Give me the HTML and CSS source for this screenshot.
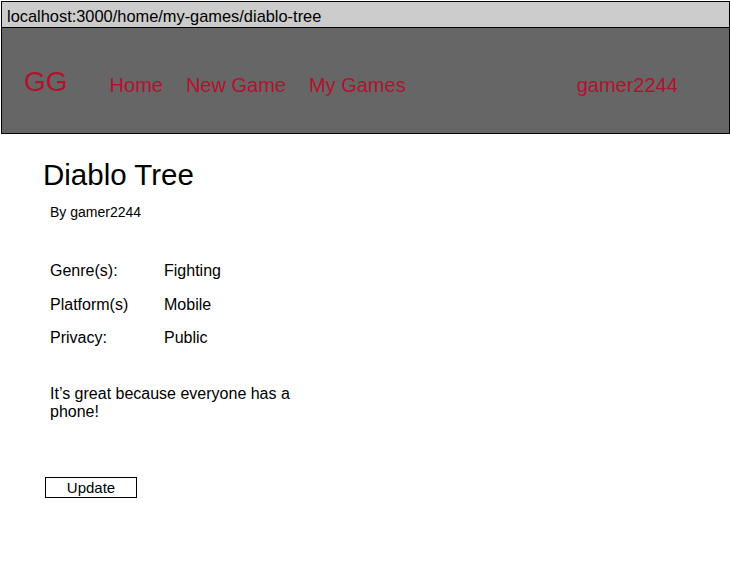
FILE: index.html
```html
<!DOCTYPE html>
<html>
<head>
<meta charset="utf-8">
<link rel="stylesheet" href="styles.css">
</head>
<body>
<div class="browser">
  <div class="urlbar">localhost:3000/home/my-games/diablo-tree</div>
  <header class="topnav">
    <span class="logo">GG</span>
    <nav class="links">
      <a>Home</a>
      <a>New Game</a>
      <a>My Games</a>
    </nav>
    <a class="user">gamer2244</a>
  </header>
</div>
<main class="game">
  <h1 class="title">Diablo Tree</h1>
  <p class="author">By gamer2244</p>
  <dl class="details">
    <div class="row"><dt>Genre(s):</dt><dd>Fighting</dd></div>
    <div class="row"><dt>Platform(s)</dt><dd>Mobile</dd></div>
    <div class="row"><dt>Privacy:</dt><dd>Public</dd></div>
  </dl>
  <p class="desc">It’s great because everyone has a phone!</p>
  <button class="update">Update</button>
</main>
</body>
</html>
```

FILE: styles.css
```css
html, body {
  margin: 0;
  padding: 0;
  background: #fff;
  font-family: "Liberation Sans", Arial, sans-serif;
  color: #000;
}
.browser {
  margin: 1px 0 0 1px;
  width: 727px;
  border: 1px solid #000;
}
.urlbar {
  background: #cccccc;
  border-bottom: 1px solid #000;
  font-size: 16.4px;
  line-height: 28px;
  padding-left: 5px;
  box-sizing: border-box;
  height: 26px;
}
.topnav {
  height: 105px;
  background: #666666;
  display: flex;
  align-items: center;
  color: #b3122e;
  padding-left: 22px;
  padding-top: 10px;
  box-sizing: border-box;
}
.logo {
  font-size: 28px;
  margin-top: -8px;
}
.links {
  display: flex;
  gap: 23px;
  margin-left: 42px;
  font-size: 20px;
}
.user {
  font-size: 20px;
  margin-left: 171px;
}
.game {
  padding: 23px 0 0 43px;
}
.title {
  margin: 0;
  font-size: 29.5px;
  font-weight: normal;
  line-height: 36px;
}
.author {
  margin: 11px 0 0 7px;
  font-size: 14px;
  line-height: 16px;
}
.details {
  margin: 42px 0 0 7px;
  font-size: 16px;
}
.row {
  display: flex;
  height: 33.5px;
}
.row dt {
  width: 114px;
}
.row dd {
  margin: 0;
}
.desc {
  margin: 22px 0 0 7px;
  width: 250px;
  font-size: 16px;
  line-height: 18px;
}
.update {
  display: block;
  margin: 56px 0 0 2px;
  width: 92px;
  height: 21px;
  background: #fff;
  border: 1px solid #000;
  font-family: "Liberation Sans", Arial, sans-serif;
  font-size: 15px;
  padding: 0;
  color: #000;
}
```
